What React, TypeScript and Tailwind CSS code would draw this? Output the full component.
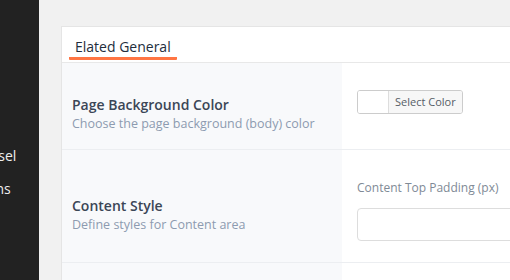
import React from 'react';

const Sidebar: React.FC = () => (
  <aside className="w-[39px] shrink-0 bg-[#222222] overflow-hidden">
    <div className="-ml-[41px] pt-[139px] text-[14px] leading-[33px] text-[#eeeeee] whitespace-nowrap">
      <div>Carousel</div>
      <div>Options</div>
    </div>
  </aside>
);

export default function App() {
  return (
    <div
      className="flex h-[280px] w-[510px] overflow-hidden bg-[#f1f1f1]"
      style={{ fontFamily: '"Open Sans", "Liberation Sans", sans-serif' }}
    >
      <Sidebar />
      <main className="flex-1 overflow-hidden pl-[22px] pt-[26px]">
        <div className="w-[600px] bg-white border border-[#e5e5e5]">
          {/* Header */}
          <div className="h-[36px] border-b border-[#e8e8e8] pl-[7px] pt-[7px]">
            <div className="inline-block px-[6px] border-b-[3px] border-[#ff7543] rounded-[1px] text-[14px] leading-[20px] font-medium text-[#222d3c]">
              Elated General
            </div>
          </div>

          {/* Row 1 */}
          <div className="flex h-[87px] border-b border-[#eceef1]">
            <div className="w-[280px] shrink-0 bg-[#f8f9fb] pl-[10px] pt-[32px]">
              <div className="text-[14px] leading-[20px] font-semibold text-[#3b4656]">Page Background Color</div>
              <div className="text-[12.5px] leading-[18px] text-[#8d9bb0]">Choose the page background (body) color</div>
            </div>
            <div className="flex-1 pl-[15px] pt-[27px]">
              <div className="flex h-[24px] w-[106px] rounded-[3px] border border-[#cccccc] overflow-hidden">
                <div className="w-[31px] bg-white border-r border-[#dddddd]"></div>
                <div className="flex-1 bg-[#f7f7f7] pl-[6px] text-[11px] leading-[22px] text-[#555d66] whitespace-nowrap">
                  Select Color
                </div>
              </div>
            </div>
          </div>

          {/* Row 2 */}
          <div className="flex h-[113px] border-b border-[#eceef1]">
            <div className="w-[280px] shrink-0 bg-[#f8f9fb] pl-[10px] pt-[46px]">
              <div className="text-[14px] leading-[20px] font-semibold text-[#3b4656]">Content Style</div>
              <div className="text-[12.5px] leading-[18px] text-[#8d9bb0]">Define styles for Content area</div>
            </div>
            <div className="flex-1 pl-[15px] pt-[29px]">
              <div className="text-[12px] leading-[18px] text-[#808a96]">Content Top Padding (px)</div>
              <div className="mt-[11px] h-[33px] w-[260px] rounded-[4px] border border-[#dddddd] bg-white"></div>
            </div>
          </div>

          <div className="flex h-[40px]">
            <div className="w-[280px] shrink-0 bg-[#f8f9fb]"></div>
            <div className="flex-1"></div>
          </div>
        </div>
      </main>
    </div>
  );
}
